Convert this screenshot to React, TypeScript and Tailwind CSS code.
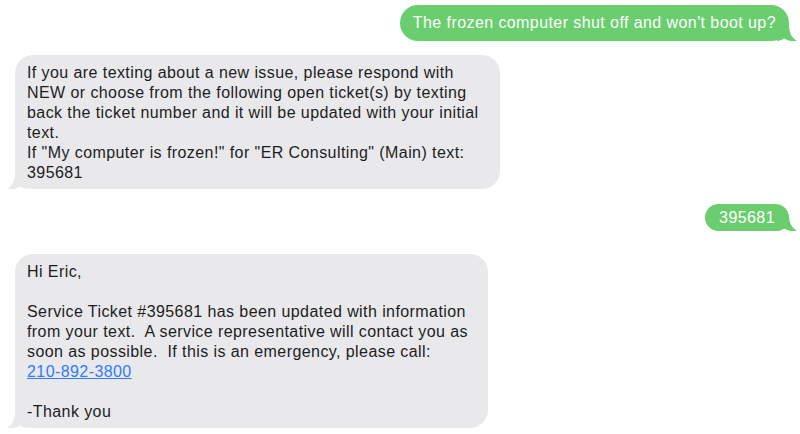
const GREEN = "#6acd6e";
const GRAY = "#e9e9eb";

function Tail({ side, color }: { side: "left" | "right"; color: string }) {
  return (
    <svg
      width="20"
      height="16"
      viewBox="0 0 20 16"
      className={
        side === "right"
          ? "absolute bottom-0 right-[-8px]"
          : "absolute bottom-0 left-[-8px] -scale-x-100"
      }
    >
      <path
        d="M0 0H12C12 8 15 13 20 16C15 16.6 10 15.5 7 13.5C5 15 2 16 0 16Z"
        fill={color}
      />
    </svg>
  );
}

function Sent({ children, className }: { children: React.ReactNode; className?: string }) {
  return (
    <div className={`relative self-end mr-[11px] rounded-[18px] bg-[#6acd6e] text-white ${className ?? ""}`}>
      {children}
      <Tail side="right" color={GREEN} />
    </div>
  );
}

function Received({ lines, className }: { lines: React.ReactNode[]; className?: string }) {
  return (
    <div className={`relative ml-[15px] rounded-[18px] bg-[#e9e9eb] px-3 pt-2 pb-1.5 text-[#1d1d1f] ${className ?? ""}`}>
      {lines.map((line, i) =>
        line === "" ? (
          <div key={i} className="h-5" />
        ) : (
          <div key={i} className="whitespace-pre">
            {line}
          </div>
        )
      )}
      <Tail side="left" color={GRAY} />
    </div>
  );
}

export default function App() {
  return (
    <div className="flex h-[434px] w-[800px] flex-col overflow-hidden bg-white pt-[5px] font-['Liberation_Sans',Arial,sans-serif] text-[16px] leading-5 tracking-[0.42px]">
      <Sent className="px-[13px] py-2">The frozen computer shut off and won't boot up?</Sent>

      <Received
        className="mt-[14px] w-[485px]"
        lines={[
          "If you are texting about a new issue, please respond with",
          "NEW or choose from the following open ticket(s) by texting",
          "back the ticket number and it will be updated with your initial",
          "text.",
          'If "My computer is frozen!" for "ER Consulting" (Main) text:',
          "395681",
        ]}
      />

      <Sent className="mt-[15px] flex h-[27px] items-center px-[14px]">395681</Sent>

      <Received
        className="mt-[23px] w-[473px]"
        lines={[
          "Hi Eric,",
          "",
          "Service Ticket #395681 has been updated with information",
          "from your text.  A service representative will contact you as",
          "soon as possible.  If this is an emergency, please call:",
          <a key="tel" href="tel:2108923800" className="text-[#2f7cf6] underline">
            210-892-3800
          </a>,
          "",
          "-Thank you",
        ]}
      />
    </div>
  );
}
